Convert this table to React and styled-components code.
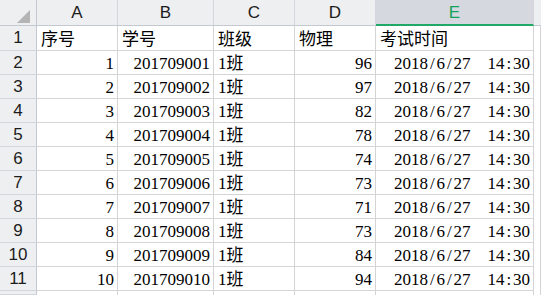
import styled, { createGlobalStyle } from "styled-components";

const GlobalStyle = createGlobalStyle`
  body {
    margin: 0;
    background: #ffffff;
    overflow: hidden;
  }
`;

const rows = [
  [1, "201709001", 96],
  [2, "201709002", 97],
  [3, "201709003", 82],
  [4, "201709004", 78],
  [5, "201709005", 74],
  [6, "201709006", 73],
  [7, "201709007", 71],
  [8, "201709008", 73],
  [9, "201709009", 84],
  [10, "201709010", 94],
];

const Sheet = styled.div`
  display: grid;
  grid-template-columns: 37px 81px 96px 81px 81px 158px 1fr;
  grid-template-rows: 26px 25px repeat(10, 24px) 1fr;
  width: 541px;
  height: 295px;
  overflow: hidden;
`;

const ColHead = styled.div`
  box-sizing: border-box;
  display: flex;
  align-items: center;
  justify-content: center;
  background: ${(p) => (p.$active ? "#d5d8de" : "#eeeff1")};
  border-right: 1px solid #d3d6dc;
  border-bottom: ${(p) => (p.$active ? "2px solid #1fa866" : "1px solid #c3c8d1")};
  padding-top: ${(p) => (p.$active ? "1px" : "0")};
  color: ${(p) => (p.$active ? "#16a15b" : "#1c1c1c")};
  font-family: "Liberation Sans", Arial, sans-serif;
  font-size: 17px;
`;

const Corner = styled(ColHead)`
  position: relative;
  border-right: 1px solid #c3c8d1;
`;

const Triangle = styled.div`
  position: absolute;
  left: 17px;
  top: 10px;
  width: 0;
  height: 0;
  border-left: 13px solid transparent;
  border-bottom: 13px solid #b4b4b4;
`;

const RowHead = styled.div`
  box-sizing: border-box;
  display: flex;
  align-items: center;
  justify-content: center;
  background: #eeeff1;
  border-right: 1px solid #c3c8d1;
  border-bottom: 1px solid #d3d6dc;
  color: #1c1c1c;
  font-family: "Liberation Sans", Arial, sans-serif;
  font-size: 17px;
`;

const Cell = styled.div`
  box-sizing: border-box;
  display: flex;
  align-items: flex-end;
  justify-content: ${(p) => (p.$right ? "flex-end" : "flex-start")};
  padding: 0 ${(p) => (p.$right ? "3px" : "0")} 0 ${(p) => (p.$right ? "0" : "4px")};
  border-right: 1px solid #d4d4d4;
  border-bottom: 1px solid #d4d4d4;
  background: #ffffff;
  color: #000000;
  font-family: "Liberation Serif", "Noto Sans CJK SC", serif;
  font-size: 17px;
  line-height: 20px;
  white-space: nowrap;
`;

const Half = styled.span`
  display: inline-block;
  width: 0.5em;
  text-align: center;
`;

const Blank = styled.div`
  box-sizing: border-box;
  border-right: 1px solid #d4d4d4;
  background: #ffffff;
`;

const BlankHead = styled.div`
  background: #eeeff1;
  border-bottom: 1px solid #c3c8d1;
`;

function DateText({ text }) {
  return (
    <span>
      {text.split("").map((ch, i) => (
        <Half key={i}>{ch === " " ? "\u00a0" : ch}</Half>
      ))}
    </span>
  );
}

export default function App() {
  const date = "2018/6/27  14:30";
  return (
    <>
      <GlobalStyle />
      <Sheet>
        <Corner>
          <Triangle />
        </Corner>
        <ColHead>A</ColHead>
        <ColHead>B</ColHead>
        <ColHead>C</ColHead>
        <ColHead>D</ColHead>
        <ColHead $active>E</ColHead>
        <BlankHead />

        <RowHead>1</RowHead>
        <Cell>序号</Cell>
        <Cell>学号</Cell>
        <Cell>班级</Cell>
        <Cell>物理</Cell>
        <Cell>考试时间</Cell>
        <Blank />

        {rows.map(([n, id, score], i) => (
          <Row key={id} index={i + 2} n={n} id={id} score={score} date={date} />
        ))}

        <RowHead />
        <Blank />
        <Blank />
        <Blank />
        <Blank />
        <Blank />
        <Blank />
      </Sheet>
    </>
  );
}

function Row({ index, n, id, score, date }) {
  return (
    <>
      <RowHead>{index}</RowHead>
      <Cell $right>{n}</Cell>
      <Cell $right>{id}</Cell>
      <Cell>1班</Cell>
      <Cell $right>{score}</Cell>
      <Cell $right>
        <DateText text={date} />
      </Cell>
      <Blank />
    </>
  );
}
